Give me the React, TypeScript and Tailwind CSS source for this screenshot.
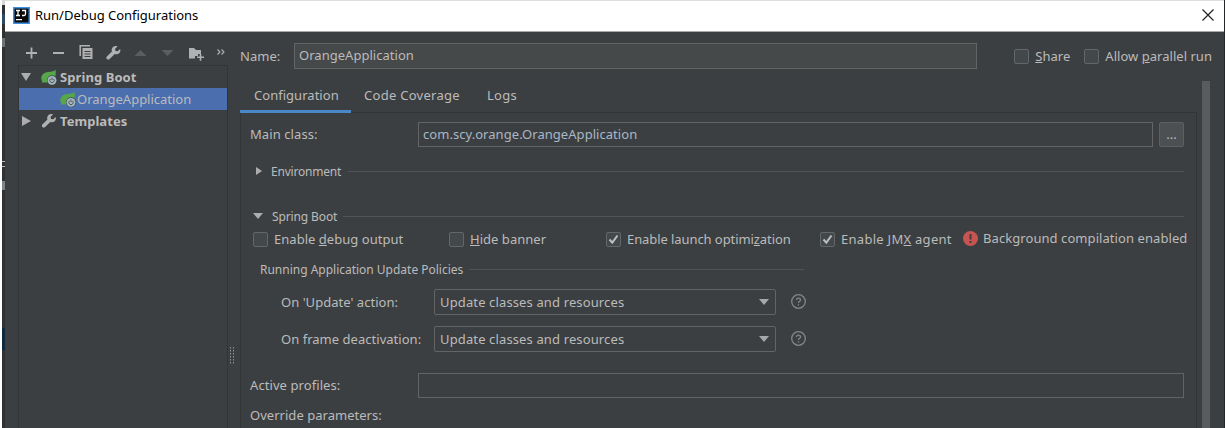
import React from "react";

const Check = ({ on = false }: { on?: boolean }) => (
  <span className="flex size-[15px] shrink-0 items-center justify-center rounded-[2px] border border-[#646769] bg-[#43494a]">
    {on && (
      <svg width="11" height="11" viewBox="0 0 11 11" fill="none" stroke="#bfbfbf" strokeWidth="2">
        <path d="M1.5 5.5 4.3 8.6 9.5 1.5" />
      </svg>
    )}
  </span>
);

const Down = ({ className = "" }: { className?: string }) => (
  <svg className={`shrink-0 ${className}`} width="10" height="6" viewBox="0 0 10 6">
    <path d="M0 0H10L5 6Z" fill="currentColor" />
  </svg>
);

const WRENCH =
  "M14.600 3.900 12.200 6.300 10 5.900 9.600 3.800 12 1.400C10.400.7 8.500 1 7.300 2.300 6.200 3.400 5.900 5 6.400 6.400L1.400 11.400C.7 12.100.7 13.300 1.400 14 2.200 14.800 3.400 14.800 4.100 14L9.300 9C10.800 9.600 12.500 9.300 13.700 8.200 14.900 7 15.200 5.400 14.600 3.900Z";

const Wrench = () => (
  <svg className="shrink-0" width="16" height="16" viewBox="0 0 16 16" fill="#afb1b3">
    <path d={WRENCH} />
  </svg>
);

const SpringIcon = () => (
  <svg className="shrink-0" width="16" height="16" viewBox="0 0 16 16">
    <path d="M14.500 .5C13.500 2.500 11 2.600 7 3 3 3.500 .3 6 .3 9c0 1.500.5 2.600 1 3.500L.3 13.500h6.500C11.500 13.600 16 9 14.500 .5Z" fill="#57a64a" />
    <circle cx="11" cy="11.300" r="5" fill="#3c4f55" />
    <circle cx="11" cy="11.300" r="4.400" fill="#a9b7bf" />
    <path d="M9.600 9.800a2.200 2.200 0 1 0 2.800 0M11 8.500v2.600" fill="none" stroke="#48565d" strokeWidth="1" />
  </svg>
);

const Help = () => (
  <svg className="shrink-0" width="15" height="15" viewBox="0 0 15 15" fill="none" stroke="#848789">
    <circle cx="7.500" cy="7.500" r="6.800" strokeWidth="1.300" />
    <path d="M5.500 6C5.500 3.400 9.500 3.400 9.500 5.900 9.500 7.300 7.500 7.300 7.500 8.900M7.500 10.200V11.600" strokeWidth="1.300" />
  </svg>
);

const Policy = ({ label, className }: { label: string; className: string }) => (
  <div className={`flex h-[26px] items-center pl-[31px] ${className}`}>
    <span className="w-[153px] shrink-0">{label}</span>
    <div className="flex h-[26px] w-[342px] items-center justify-between rounded-[2px] border border-[#646464] pr-[6px] pl-[5px] tracking-[0.13px]">
      <span>Update classes and resources</span>
      <Down className="text-[#a5a7a9]" />
    </div>
    <span className="mb-px ml-[15px]"><Help /></span>
  </div>
);

const Rule = () => <span className="h-px flex-1 bg-[#515355]" />;

export default function App() {
  return (
    <div className="flex h-[428px] w-[1225px] overflow-hidden bg-[#3c3f41] font-['Noto_Sans','Noto_Sans_CJK_SC',sans-serif] text-[13px] leading-[20px] tracking-[0.03px] whitespace-nowrap text-[#bbbbbb]">
      <div className="w-[2px] shrink-0 bg-white" />
      <div className="w-[3px] shrink-0 bg-[#303132]">
        <div className="h-[5px] bg-[#d8d8d8]" />
        <div className="mt-[9px] h-[10px] bg-[#2c4c66]" />
        <div className="mt-[14px] h-[9px] bg-[#6d7477]" />
        <div className="mt-[114px] h-px bg-[#bbbbbb]" />
        <div className="mt-[4px] h-px bg-[#bbbbbb]" />
        <div className="mt-[14px] h-[9px] bg-[#7e8589]" />
        <div className="mt-[138px] h-[22px] bg-[#0d293e]" />
      </div>
      <div className="flex min-w-0 flex-1 flex-col">
        <header className="flex h-[32px] shrink-0 items-center border-t border-b border-t-[#dddddd] border-b-[#aaaaaa] bg-white pr-[10px] pl-[8px] text-black">
          <svg className="mb-px" width="17" height="17" viewBox="0 0 17 17">
            <path d="M0 0H17V17H0Z" fill="#3b91e4" />
            <path d="M1.500 1.500H15.500V15.500H1.500Z" fill="#0a0a0a" />
            <path d="M3 3.500H7M5 3.500V8.500M3 8.500H7M9 3.500H12.500V7Q12.500 8.500 11 8.500H9M3 12.700H9" fill="none" stroke="white" strokeWidth="1.300" />
          </svg>
          <span className="-mt-[2px] ml-[5px] tracking-[-0.02px]">Run/Debug Configurations</span>
          <svg className="mb-[2px] ml-auto" width="12" height="12" viewBox="0 0 12 12" fill="none" stroke="#222" strokeWidth="1.200">
            <path d="M.5.5 11.500 11.500M11.500.5.5 11.500" />
          </svg>
        </header>
        <div className="flex min-h-0 flex-1">
          <aside className="flex w-[235px] shrink-0">
            <div className="ml-[13px] flex w-[210px] shrink-0 flex-col">
              <div className="flex h-[33px] shrink-0 items-center pt-[8px] pl-[5px]">
                <svg width="204" height="16" viewBox="0 0 204 16" fill="none" stroke="#afb1b3">
                  <path d="M3 8H14M8.500 2.500V13.500M30 8H41" strokeWidth="1.800" />
                  <path d="M57.200 11V.8H67" strokeWidth="1.500" />
                  <path d="M59.500 3H69.500V14H59.500Z" fill="#afb1b3" stroke="none" />
                  <path d="M61.500 6.500H67.500M61.500 9H67.500M61.500 11.500H67.500" stroke="#3c3f41" strokeWidth="1" />
                  <g transform="translate(82.500 0)" fill="#afb1b3" stroke="none">
                    <path d={WRENCH} />
                  </g>
                  <path d="M111.500 11H123.500L117.500 5ZM138.500 5H150.500L144.500 11Z" fill="#5b5e60" stroke="none" />
                  <path d="M166 3H171L173 5H178V9H175V11H172V13.500H166Z" fill="#afb1b3" stroke="none" />
                  <path d="M174 12.300H181M177.500 9V15.800" strokeWidth="1.600" />
                  <path d="M194.500 4.500 197 7 194.500 9.500M198.500 4.500 201 7 198.500 9.500" strokeWidth="1.100" />
                </svg>
              </div>
              <div className="flex flex-1 flex-col border border-b-0 border-[#323537]">
                <div className="flex h-[22px] items-center pl-[2px] font-bold">
                  <svg className="shrink-0" width="10" height="8" viewBox="0 0 10 8"><path d="M0 0H10L5 8Z" fill="#adadad" /></svg>
                  <span className="mr-[2px] ml-[10px]"><SpringIcon /></span>
                  <span className="ml-px tracking-[0.080px]">Spring Boot</span>
                </div>
                <div className="flex h-[22px] items-center bg-[#4b6eaf] pl-[41px] tracking-[-0.01px]">
                  <SpringIcon />
                  <span className="ml-px">OrangeApplication</span>
                </div>
                <div className="flex h-[22px] items-center pl-[3px] font-bold">
                  <svg width="9" height="10" viewBox="0 0 9 10"><path d="M0 0V10L9 5Z" fill="#adadad" /></svg>
                  <span className="mr-[3px] ml-[10px]"><Wrench /></span>
                  <span className="tracking-[0.050px]">Templates</span>
                </div>
              </div>
            </div>
            <svg className="mt-[315px] ml-[2px]" width="5" height="17" viewBox="0 0 5 17">
              <path d="M.5 0V17M3.500 0V17" stroke="#929496" strokeDasharray="1.500 1.500" />
            </svg>
          </aside>
          <main className="flex w-[957px] shrink-0 flex-col">
            <div className="mt-[11px] flex h-[26px] shrink-0 items-center">
              <span className="-mt-px w-[54px]">Name:</span>
              <div className="flex h-[26px] w-[683px] items-center border border-[#646464] bg-[#45494a] pb-[2px] pl-[4px]">OrangeApplication</div>
            </div>
            <nav className="mt-[12px] flex h-[32px] shrink-0 border-b border-[#323537]">
              <span className="h-[32px] w-[111px] shrink-0 border-b-[3px] border-[#4a88c7] pt-[4px] pl-[14px]">Configuration</span>
              <span className="w-[123px] pt-[4px] pl-[13px] tracking-[0.28px]">Code Coverage</span>
              <span className="pt-[4px] pl-[13px] tracking-[0.280px]">Logs</span>
            </nav>
            <section className="flex flex-1 flex-col border-r border-l border-[#323537] pl-[9px]">
              <div className="flex h-[42px] items-center">
                <span className="w-[168px] tracking-[0.080px]">Main class:</span>
                <div className="flex h-[25px] w-[735px] items-center border border-[#646464] pl-[4px] tracking-[0.050px] text-[#a9b7c6]">com.scy.orange.OrangeApplication</div>
                <div className="ml-[6px] flex h-[25px] w-[25px] items-center justify-center rounded-[2px] border border-[#5e6060] bg-[#4c5052]">...</div>
              </div>
              <div className="flex h-[32px] items-center pr-[12px] pl-[6px] text-[12px]">
                <svg width="6" height="8" viewBox="0 0 6 8"><path d="M0 0V8L6 4Z" fill="#adadad" /></svg>
                <span className="mt-px mr-[7px] ml-[9px] tracking-[-0.2px]">Environment</span>
                <Rule />
              </div>
              <div className="mt-[14px] flex h-[30px] items-center pr-[12px] pl-[3px] text-[12px]">
                <Down className="text-[#adadad]" />
                <span className="mt-px mr-[6px] ml-[9px] tracking-[-0.120px]">Spring Boot</span>
                <Rule />
              </div>
              <div className="flex h-[16px] items-center pl-[3px]">
                <div className="flex w-[196px] items-center gap-[6px]"><Check /><span>Enable <u>d</u>ebug output</span></div>
                <div className="flex w-[157px] items-center gap-[6px]"><Check /><span><u>H</u>ide banner</span></div>
                <div className="flex w-[214px] items-center gap-[6px] tracking-[-0.080px]"><Check on /><span>Enable launch optimi<u>z</u>ation</span></div>
                <div className="flex w-[143px] items-center gap-[6px] tracking-[0.280px]"><Check on /><span>Enable JM<u>X</u> agent</span></div>
                <svg className="mb-px shrink-0" width="15" height="15" viewBox="0 0 15 15">
                  <circle cx="7.500" cy="7.500" r="7.500" fill="#c75450" />
                  <path d="M7.500 3V8.500M7.500 10V12" stroke="#3c3f41" strokeWidth="2" />
                </svg>
                <span className="-mt-[2px] ml-[5px] tracking-[0.070px]">Background compilation enabled</span>
              </div>
              <div className="mt-[12px] flex h-[20px] w-[554px] items-center pl-[10px] text-[12px]">
                <span className="mt-px mr-[6px] tracking-[-0.010px]">Running Application Update Policies</span>
                <Rule />
              </div>
              <Policy label="On 'Update' action:" className="mt-[10px]" />
              <Policy label="On frame deactivation:" className="mt-[11px]" />
              <div className="mt-[21px] flex h-[25px] items-center">
                <span className="-mt-px w-[168px] tracking-[0.080px]">Active profiles:</span>
                <div className="h-[25px] w-[766px] border border-[#646464]" />
              </div>
              <div className="mt-[7px] h-[20px]">Override parameters:</div>
            </section>
          </main>
          <div className="flex w-[27px] shrink-0 flex-col">
            <div className="mt-[16px] flex h-[16px] items-center self-end pr-[12px]">
              <Check /><span className="mr-[14px] ml-[6px]"><u>S</u>hare</span>
              <Check /><span className="ml-[6px]">Allow <u>p</u>arallel run</span>
            </div>
            <div className="mt-[17px] ml-[5px] w-[8px] flex-1 bg-[#595b5d]" />
          </div>
        </div>
      </div>
      <div className="w-px shrink-0 bg-[#242628]" />
    </div>
  );
}
